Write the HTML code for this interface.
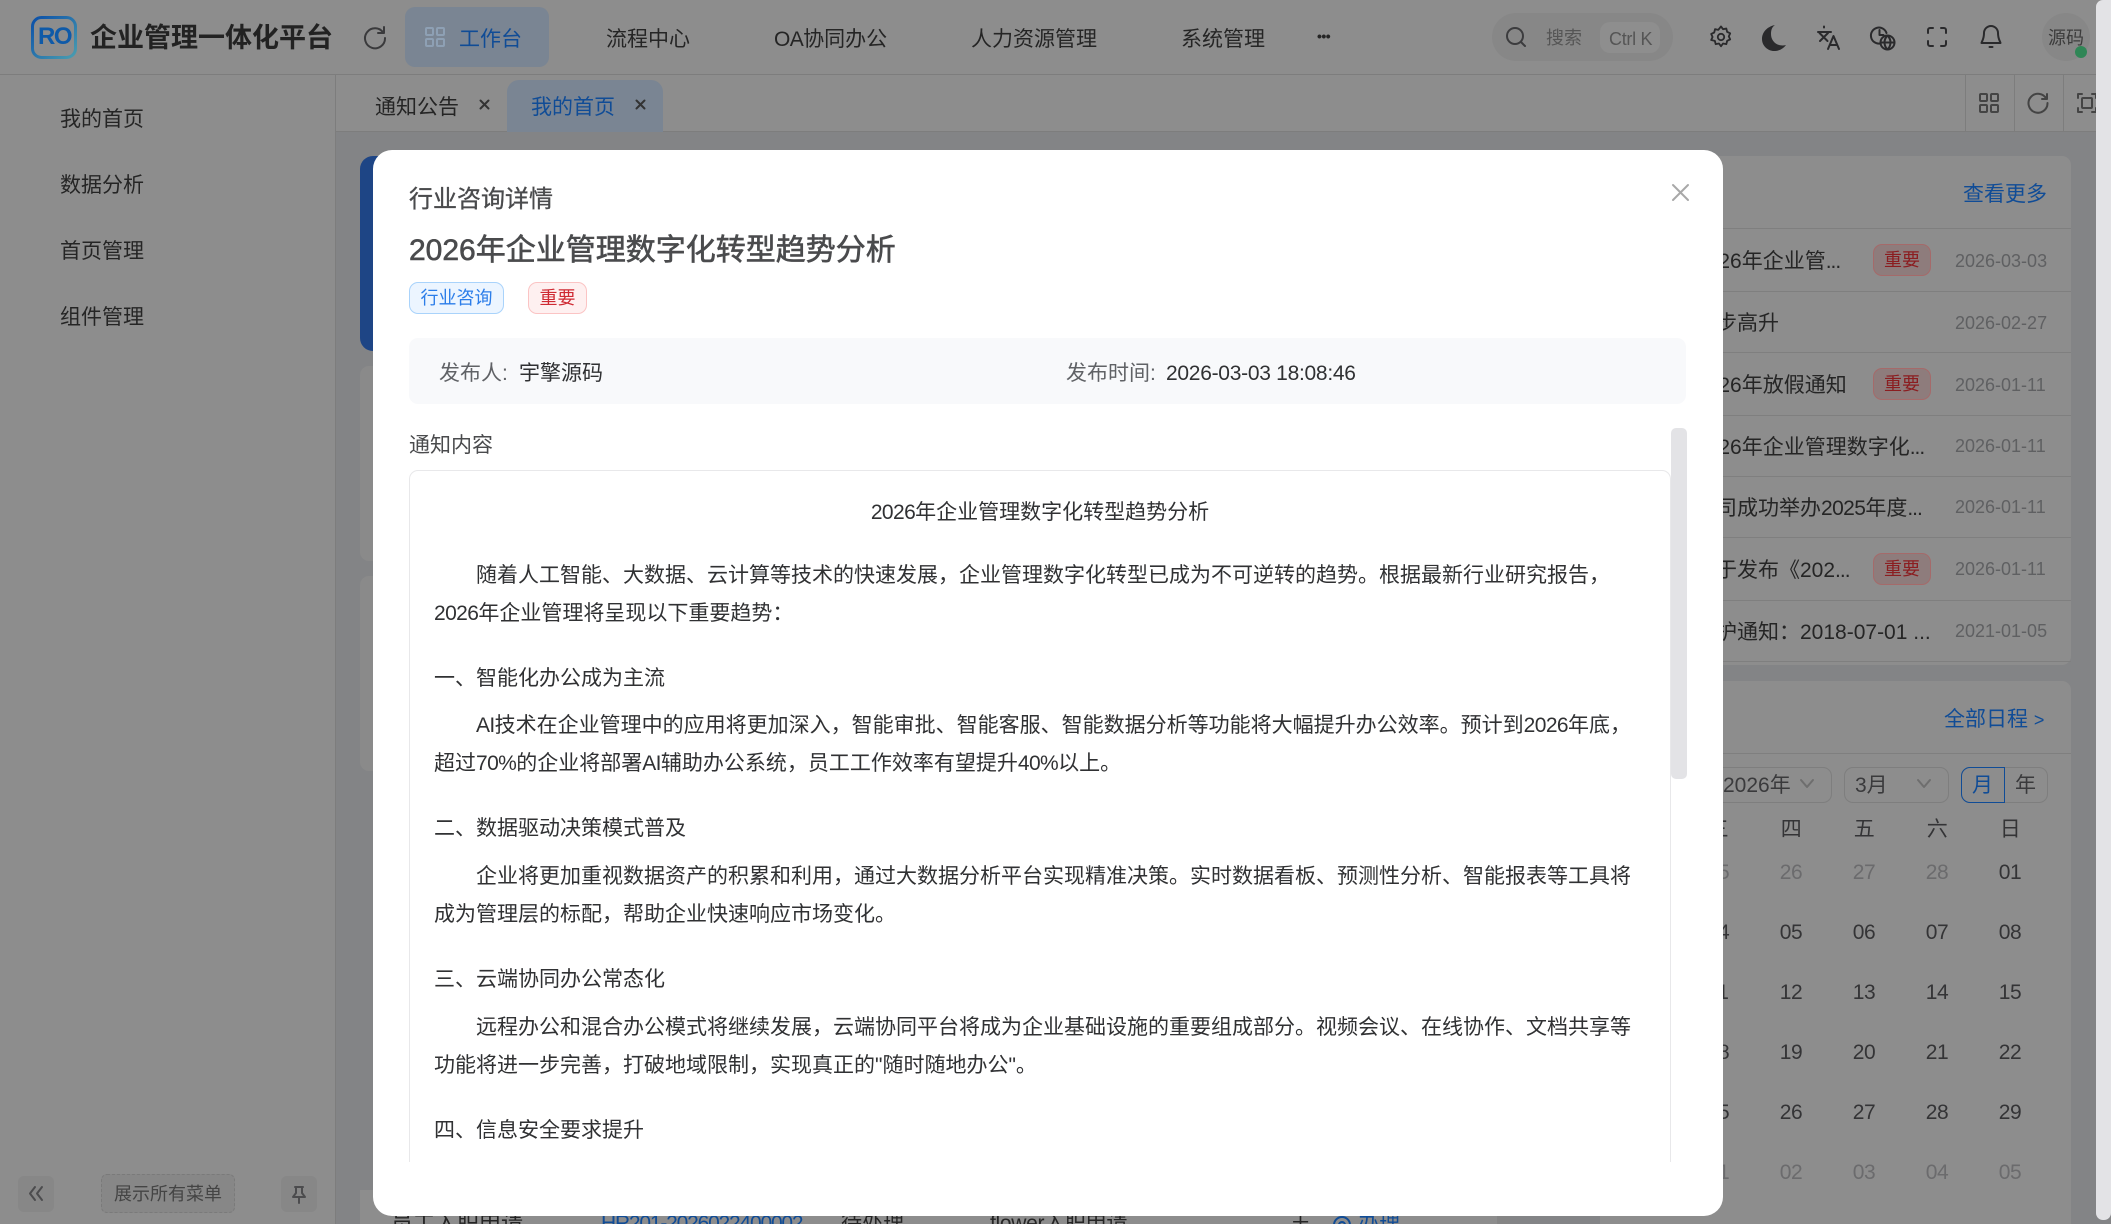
<!DOCTYPE html>
<html lang="zh"><head><meta charset="utf-8"><title>企业管理一体化平台</title>
<style>
html,body{margin:0;padding:0;width:2111px;height:1224px;overflow:hidden;background:#838486}
body{position:relative;font-family:"Liberation Sans","Noto Sans CJK SC",sans-serif;color:#252525}
.a{position:absolute}
.t{position:absolute;white-space:nowrap;line-height:1;font-size:21px}
.b{background:#8d8d8d}
.blue{color:#104c96}
svg{position:absolute;overflow:visible;fill:none;stroke:#2a2a2c;stroke-width:2;stroke-linecap:round;stroke-linejoin:round}
.d{font-size:18px;color:#5f6062}
.rl{position:absolute;left:1660px;width:411px;height:1px;background:#7f7f7f}
.bd{position:absolute;left:1873px;width:56px;height:30px;border:1px solid #a56a6a;border-radius:9px;background:#8e7c7c;color:#8b1d20;font-size:18px;line-height:31px;text-align:center}
.c{position:absolute;width:60px;text-align:center;line-height:1;font-size:21px;letter-spacing:-.4px;color:#343436;white-space:nowrap}
.g{color:#6b6b6d}
.e{letter-spacing:-1px}
.n{letter-spacing:-.6px}
#m{position:absolute;left:373px;top:150px;width:1350px;height:1066px;background:#fff;border-radius:19px}
.m{position:absolute;white-space:nowrap;line-height:1;font-size:21px;color:#303133}
</style></head><body>

<!-- header -->
<div class="a b" style="left:0;top:0;width:2111px;height:74px;border-bottom:1.5px solid #7d7d7d"></div>
<svg style="left:31px;top:16px" width="46" height="43" viewBox="0 0 46 43"><defs><linearGradient id="lg" x1="0" y1="0" x2="1" y2="1"><stop offset="0" stop-color="#0a4fa8"/><stop offset="1" stop-color="#4a9db0"/></linearGradient></defs><rect x="1.500" y="1.500" width="43" height="40" rx="9" stroke="url(#lg)" stroke-width="3"/></svg>
<div class="t" style="left:38px;top:25px;font-size:24px;font-weight:700;color:#0f5aa8;letter-spacing:-1.500px">RO</div>
<div class="t" style="left:90px;top:25px;font-size:27px;font-weight:700;color:#222">企业管理一体化平台</div>
<svg style="left:364px;top:26px" width="22" height="22" viewBox="0 0 22 22"><path d="M19.500 7A10 10 0 1 0 21 12" style="stroke:#3a3a3c"/><path d="M20 1v6h-6" style="stroke:#3a3a3c"/></svg>
<div class="a" style="left:405px;top:7px;width:144px;height:60px;background:#7a8593;border-radius:10px"></div>
<svg style="left:425px;top:27px" width="20" height="20" viewBox="0 0 20 20"><g style="stroke:#8ea0b4"><rect x="1" y="1" width="7" height="7" rx="1"/><rect x="12" y="1" width="7" height="7" rx="1"/><rect x="1" y="12" width="7" height="7" rx="1"/><rect x="12" y="12" width="7" height="7" rx="1"/></g></svg>
<div class="t blue" style="left:459px;top:29px">工作台</div>
<div class="t" style="left:606px;top:29px">流程中心</div>
<div class="t" style="left:774px;top:29px"><span class="n">OA</span>协同办公</div>
<div class="t" style="left:971px;top:29px">人力资源管理</div>
<div class="t" style="left:1181px;top:29px">系统管理</div>
<div class="t" style="left:1317px;top:29px;font-size:14px;font-weight:700;letter-spacing:-.5px">•••</div>

<div class="a" style="left:1492px;top:13px;width:181px;height:48px;border-radius:24px;background:#878787"></div>
<svg style="left:1506px;top:27px" width="20" height="20" viewBox="0 0 20 20"><g style="stroke:#3c3c3e"><circle cx="9" cy="9" r="8"/><path d="M15 15l4 4"/></g></svg>
<div class="t" style="left:1546px;top:29px;font-size:18px;color:#555">搜索</div>
<div class="a" style="left:1600px;top:22px;width:60px;height:31px;border-radius:10px;background:#8e8e8e"></div>
<div class="t" style="left:1609px;top:30px;font-size:18px;color:#555;letter-spacing:-.3px">Ctrl K</div>

<svg style="left:1710px;top:25px" width="22" height="24" viewBox="0 0 24 24"><path d="M12 1.500l2.200 3 3.600-.7.9 3.600 3.300 1.600-1.500 3.300 1.500 3.300-3.300 1.600-.9 3.600-3.600-.7-2.200 3-2.200-3-3.600.7-.9-3.600L1.300 16.300l1.500-3.300-1.500-3.300 3.300-1.600.9-3.600 3.600.7z" transform="translate(0 -1)"/><circle cx="12" cy="12" r="3.500"/></svg>
<svg style="left:1762px;top:25px" width="24" height="26" viewBox="0 0 24 26"><path d="M13 0C4 2 0 8 0 14c0 7 6 12 12 12 5 0 9-2 12-6-8 2-15-3-15-11 0-4 1-7 4-9z" style="fill:#2a2a2c;stroke:none"/></svg>
<svg style="left:1817px;top:25px" width="23" height="25" viewBox="0 0 23 25"><path d="M1 7h13M7 1.500v1M2.500 8l8 8M11 8l-8 8M11 24l5.500-13L22 24M13 20h7"/></svg>
<svg style="left:1871px;top:26px" width="25" height="25" viewBox="0 0 25 25" stroke-width="1.700"><path d="M9 17.500A8 8 0 1 1 15.500 7"/><path d="M8.500 4v5h4"/><circle cx="16.500" cy="16.500" r="7"/><path d="M9.500 16.500h14M16.500 9.500c-4 4-4 10 0 14M16.500 9.500c4 4 4 10 0 14"/></svg>
<svg style="left:1927px;top:27px" width="20" height="20" viewBox="0 0 20 20"><path d="M1 6V3a2 2 0 0 1 2-2h3M14 1h3a2 2 0 0 1 2 2v3M19 14v3a2 2 0 0 1-2 2h-3M6 19H3a2 2 0 0 1-2-2v-3"/></svg>
<svg style="left:1981px;top:25px" width="20" height="24" viewBox="0 0 20 24"><path d="M10 1a7 7 0 0 1 7 7c0 6 2 8 2.500 10H.500C1 16 3 14 3 8a7 7 0 0 1 7-7zM8.500 22h3"/></svg>

<div class="a" style="left:2042px;top:13px;width:48px;height:48px;border-radius:50%;background:#878787"></div>
<div class="t" style="left:2048px;top:29px;font-size:18px;color:#3c3c3c">源码</div>
<div class="a" style="left:2075px;top:46px;width:12px;height:12px;border-radius:50%;background:#2f8656"></div>

<!-- sidebar -->
<div class="a b" style="left:0;top:75px;width:335px;height:1149px;border-right:1.5px solid #7d7d7d"></div>
<div class="t" style="left:60px;top:109px">我的首页</div>
<div class="t" style="left:60px;top:175px">数据分析</div>
<div class="t" style="left:60px;top:241px">首页管理</div>
<div class="t" style="left:60px;top:307px">组件管理</div>
<div class="a" style="left:18px;top:1176px;width:36px;height:36px;border-radius:6px;background:#878787"></div>
<svg style="left:29px;top:1186px" width="14" height="15" viewBox="0 0 14 15"><g style="stroke:#4c4c4e"><path d="M6 1L1 7.500 6 14M13 1L8 7.500 13 14"/></g></svg>
<div class="a" style="left:101px;top:1174px;width:132px;height:37px;border-radius:6px;background:#878787;border:1px dashed #7a7a7a;font-size:18px;line-height:38px;text-align:center;color:#444">展示所有菜单</div>
<div class="a" style="left:281px;top:1176px;width:36px;height:36px;border-radius:6px;background:#878787"></div>
<svg style="left:291px;top:1186px" width="16" height="18" viewBox="0 0 16 18"><path d="M4 1h8M5 1v6L2 11h12l-3-4V1M8 11v6" style="stroke:#4c4c4e"/></svg>

<!-- tab bar -->
<div class="a b" style="left:336px;top:75px;width:1775px;height:56px;border-bottom:1.5px solid #7d7d7d"></div>
<div class="t" style="left:375px;top:97px">通知公告</div>
<svg style="left:480px;top:100px" width="9" height="9" viewBox="0 0 9 9" stroke-width="1.500"><path d="M.5 .5l8 8M8.500 .5l-8 8" style="stroke:#333"/></svg>
<div class="a" style="left:507px;top:80px;width:156px;height:52px;background:#7a8593;border-radius:12px 12px 0 0"></div>
<div class="t blue" style="left:531px;top:97px">我的首页</div>
<svg style="left:636px;top:100px" width="9" height="9" viewBox="0 0 9 9" stroke-width="1.500"><path d="M.5 .5l8 8M8.500 .5l-8 8" style="stroke:#333"/></svg>
<div class="a" style="left:1965px;top:75px;width:1px;height:56px;background:#7d7d7d"></div>
<div class="a" style="left:2014px;top:75px;width:1px;height:56px;background:#7d7d7d"></div>
<div class="a" style="left:2063px;top:75px;width:1px;height:56px;background:#7d7d7d"></div>
<svg style="left:1979px;top:93px" width="20" height="20" viewBox="0 0 20 20"><g style="stroke:#444"><rect x="1" y="1" width="7" height="7" rx="1"/><rect x="12" y="1" width="7" height="7" rx="1"/><rect x="1" y="12" width="7" height="7" rx="1"/><rect x="12" y="12" width="7" height="7" rx="1"/></g></svg>
<svg style="left:2028px;top:93px" width="20" height="20" viewBox="0 0 20 20"><g style="stroke:#444"><path d="M18.500 6A9.500 9.500 0 1 0 19.500 10"/><path d="M19 1v5h-5"/></g></svg>
<svg style="left:2077px;top:93px" width="20" height="20" viewBox="0 0 20 20"><g style="stroke:#444"><path d="M1 5V1h4M15 1h4v4M19 15v4h-4M5 19H1v-4"/><rect x="5" y="5" width="10" height="10" rx="1"/></g></svg>

<!-- main cards behind -->
<div class="a" style="left:360px;top:156px;width:60px;height:195px;background:#1e4585;border-radius:13px"></div>
<div class="a" style="left:360px;top:366px;width:60px;height:195px;background:#8a8a8a;border-radius:9px"></div>
<div class="a" style="left:360px;top:576px;width:60px;height:195px;background:#8a8a8a;border-radius:9px"></div>

<div class="a b" style="left:1600px;top:156px;width:471px;height:509px;border-radius:9px"></div>
<div class="t blue" style="left:1963px;top:184px">查看更多</div>
<div class="rl" style="top:228px"></div><div class="rl" style="top:291px"></div><div class="rl" style="top:352px"></div><div class="rl" style="top:415px"></div><div class="rl" style="top:476px"></div><div class="rl" style="top:537px"></div><div class="rl" style="top:600px"></div><div class="rl" style="top:661px"></div>

<div class="t" style="left:1695px;top:251px">2026年企业管<span class="e">...</span></div><div class="bd" style="top:244px">重要</div><div class="t d" style="left:1955px;top:252px">2026-03-03</div>
<div class="t" style="left:1695px;top:313px">稳步高升</div><div class="t d" style="left:1955px;top:314px">2026-02-27</div>
<div class="t" style="left:1695px;top:375px">2026年放假通知</div><div class="bd" style="top:368px">重要</div><div class="t d" style="left:1955px;top:376px">2026-01-11</div>
<div class="t" style="left:1695px;top:437px">2026年企业管理数字化<span class="e">...</span></div><div class="t d" style="left:1955px;top:437px">2026-01-11</div>
<div class="t" style="left:1695px;top:498px">公司成功举办<span class="n">2025</span>年度<span class="e">...</span></div><div class="t d" style="left:1955px;top:498px">2026-01-11</div>
<div class="t" style="left:1695px;top:560px">关于发布《202<span class="e">...</span></div><div class="bd" style="top:553px">重要</div><div class="t d" style="left:1955px;top:560px">2026-01-11</div>
<div class="t" style="left:1695px;top:622px">维护通知：2018-07-01 ...</div><div class="t d" style="left:1955px;top:622px">2021-01-05</div>

<div class="a b" style="left:1600px;top:681px;width:471px;height:543px;border-radius:9px 9px 0 0"></div>
<div class="t blue" style="left:1944px;top:709px">全部日程 <span style="font-size:18px">&gt;</span></div>
<div class="rl" style="top:753px"></div>
<div class="a" style="left:1680px;top:767px;width:150px;height:34px;border:1px solid #7e7e7e;border-radius:9px"></div>
<div class="t" style="left:1723px;top:775px;color:#3a3a3c">2026年</div>
<svg style="left:1800px;top:779px" width="14" height="9" viewBox="0 0 14 9" stroke-width="1.300"><path d="M1 1l6 7 6-7" style="stroke:#6e6e6e"/></svg>
<div class="a" style="left:1844px;top:767px;width:103px;height:34px;border:1px solid #7e7e7e;border-radius:9px"></div>
<div class="t" style="left:1855px;top:775px;color:#3a3a3c">3月</div>
<svg style="left:1917px;top:779px" width="14" height="9" viewBox="0 0 14 9" stroke-width="1.300"><path d="M1 1l6 7 6-7" style="stroke:#6e6e6e"/></svg>
<div class="a" style="left:1961px;top:767px;width:85px;height:34px;border:1px solid #7e7e7e;border-radius:9px"></div>
<div class="a" style="left:1961px;top:767px;width:42px;height:34px;border:1px solid #104c96;border-radius:9px 0 0 9px"></div>
<div class="t blue" style="left:1972px;top:775px">月</div>
<div class="t" style="left:2015px;top:775px;color:#3a3a3c">年</div>

<div class="c" style="left:1688px;top:819px">三</div><div class="c" style="left:1761px;top:819px">四</div><div class="c" style="left:1834px;top:819px">五</div><div class="c" style="left:1907px;top:819px">六</div><div class="c" style="left:1980px;top:819px">日</div>

<div class="c g" style="left:1688px;top:862px">25</div><div class="c g" style="left:1761px;top:862px">26</div><div class="c g" style="left:1834px;top:862px">27</div><div class="c g" style="left:1907px;top:862px">28</div><div class="c" style="left:1980px;top:862px">01</div>
<div class="c" style="left:1688px;top:922px">04</div><div class="c" style="left:1761px;top:922px">05</div><div class="c" style="left:1834px;top:922px">06</div><div class="c" style="left:1907px;top:922px">07</div><div class="c" style="left:1980px;top:922px">08</div>
<div class="c" style="left:1688px;top:982px">11</div><div class="c" style="left:1761px;top:982px">12</div><div class="c" style="left:1834px;top:982px">13</div><div class="c" style="left:1907px;top:982px">14</div><div class="c" style="left:1980px;top:982px">15</div>
<div class="c" style="left:1688px;top:1042px">18</div><div class="c" style="left:1761px;top:1042px">19</div><div class="c" style="left:1834px;top:1042px">20</div><div class="c" style="left:1907px;top:1042px">21</div><div class="c" style="left:1980px;top:1042px">22</div>
<div class="c" style="left:1688px;top:1102px">25</div><div class="c" style="left:1761px;top:1102px">26</div><div class="c" style="left:1834px;top:1102px">27</div><div class="c" style="left:1907px;top:1102px">28</div><div class="c" style="left:1980px;top:1102px">29</div>
<div class="c g" style="left:1688px;top:1162px">01</div><div class="c g" style="left:1761px;top:1162px">02</div><div class="c g" style="left:1834px;top:1162px">03</div><div class="c g" style="left:1907px;top:1162px">04</div><div class="c g" style="left:1980px;top:1162px">05</div>

<!-- bottom table row peeking -->
<div class="a b" style="left:360px;top:1190px;width:1150px;height:34px"></div>
<div class="a" style="left:1497px;top:1190px;width:13px;height:34px;background:#858585"></div>
<div class="t" style="left:391px;top:1213px;font-size:22px">员工入职申请</div>
<div class="t blue" style="left:601px;top:1213px;letter-spacing:-1.200px">HR201-2026022400002</div>
<div class="t" style="left:841px;top:1213px">待处理</div>
<div class="t" style="left:990px;top:1213px;letter-spacing:-.3px">flower入职申请</div>
<div class="t" style="left:1290px;top:1213px">王</div>
<div class="t blue" style="left:1358px;top:1213px">办理</div>
<svg style="left:1332px;top:1215px" width="20" height="20" viewBox="0 0 20 20"><circle cx="10" cy="10" r="8" style="stroke:#104c96"/><circle cx="10" cy="10" r="3" style="stroke:#104c96"/></svg>

<!-- page scrollbar -->
<div class="a" style="left:2096px;top:0;width:15px;height:1220px;background:#e3e3e6;border-radius:7px 0 7px 7px"></div>

<!-- modal -->
<div id="m"></div>
<div class="m" style="left:409px;top:188px;font-size:24px;color:#4a4b4d;-webkit-text-stroke:.35px #4a4b4d">行业咨询详情</div>
<div class="m" style="left:409px;top:236px;font-size:30px;color:#4a4b4d;-webkit-text-stroke:.6px #4a4b4d">2026年企业管理数字化转型趋势分析</div>
<svg style="left:1672px;top:184px" width="17" height="17" viewBox="0 0 17 17" stroke-width="1.500"><path d="M1 1l15 15M16 1L1 16" style="stroke:#a8a8a8"/></svg>
<div class="a" style="left:409px;top:282px;width:93px;height:30px;border:1px solid #a9d3fb;border-radius:9px;background:#ecf5ff;color:#2b7de9;font-size:18px;line-height:31px;text-align:center">行业咨询</div>
<div class="a" style="left:528px;top:282px;width:57px;height:30px;border:1px solid #fbc4c4;border-radius:9px;background:#fef0f0;color:#cf2a33;font-size:18px;line-height:31px;text-align:center">重要</div>
<div class="a" style="left:409px;top:338px;width:1277px;height:66px;border-radius:9px;background:#f8f9fb"></div>
<div class="m" style="left:439px;top:363px;color:#606266">发布人:</div>
<div class="m" style="left:519px;top:363px">宇擎源码</div>
<div class="m" style="left:1066px;top:363px;color:#606266">发布时间:</div>
<div class="m" style="left:1166px;top:363px;letter-spacing:-.28px">2026-03-03 18:08:46</div>
<div class="m" style="left:409px;top:435px;color:#4a4b4d">通知内容</div>
<div class="a" style="left:409px;top:470px;width:1262px;height:692px;border:1.5px solid #e8e8ea;border-bottom:none;border-radius:9px 9px 0 0;box-sizing:border-box"></div>
<div class="a" style="left:1671px;top:428px;width:16px;height:351px;background:#e3e3e6;border-radius:5px"></div>

<div class="m" style="left:409px;width:1262px;text-align:center;top:502px"><span class="n">2026</span>年企业管理数字化转型趋势分析</div>
<div class="m" style="left:476px;top:565px">随着人工智能、大数据、云计算等技术的快速发展，企业管理数字化转型已成为不可逆转的趋势。根据最新行业研究报告，</div>
<div class="m" style="left:434px;top:603px"><span class="n">2026</span>年企业管理将呈现以下重要趋势：</div>
<div class="m" style="left:434px;top:668px">一、智能化办公成为主流</div>
<div class="m" style="left:476px;top:715px"><span class="n">AI</span>技术在企业管理中的应用将更加深入，智能审批、智能客服、智能数据分析等功能将大幅提升办公效率。预计到<span class="n">2026</span>年底，</div>
<div class="m" style="left:434px;top:753px">超过<span class="n">70%</span>的企业将部署<span class="n">AI</span>辅助办公系统，员工工作效率有望提升<span class="n">40%</span>以上。</div>
<div class="m" style="left:434px;top:818px">二、数据驱动决策模式普及</div>
<div class="m" style="left:476px;top:866px">企业将更加重视数据资产的积累和利用，通过大数据分析平台实现精准决策。实时数据看板、预测性分析、智能报表等工具将</div>
<div class="m" style="left:434px;top:904px">成为管理层的标配，帮助企业快速响应市场变化。</div>
<div class="m" style="left:434px;top:969px">三、云端协同办公常态化</div>
<div class="m" style="left:476px;top:1017px">远程办公和混合办公模式将继续发展，云端协同平台将成为企业基础设施的重要组成部分。视频会议、在线协作、文档共享等</div>
<div class="m" style="left:434px;top:1055px">功能将进一步完善，打破地域限制，实现真正的"随时随地办公"。</div>
<div class="m" style="left:434px;top:1120px">四、信息安全要求提升</div>
</body></html>
